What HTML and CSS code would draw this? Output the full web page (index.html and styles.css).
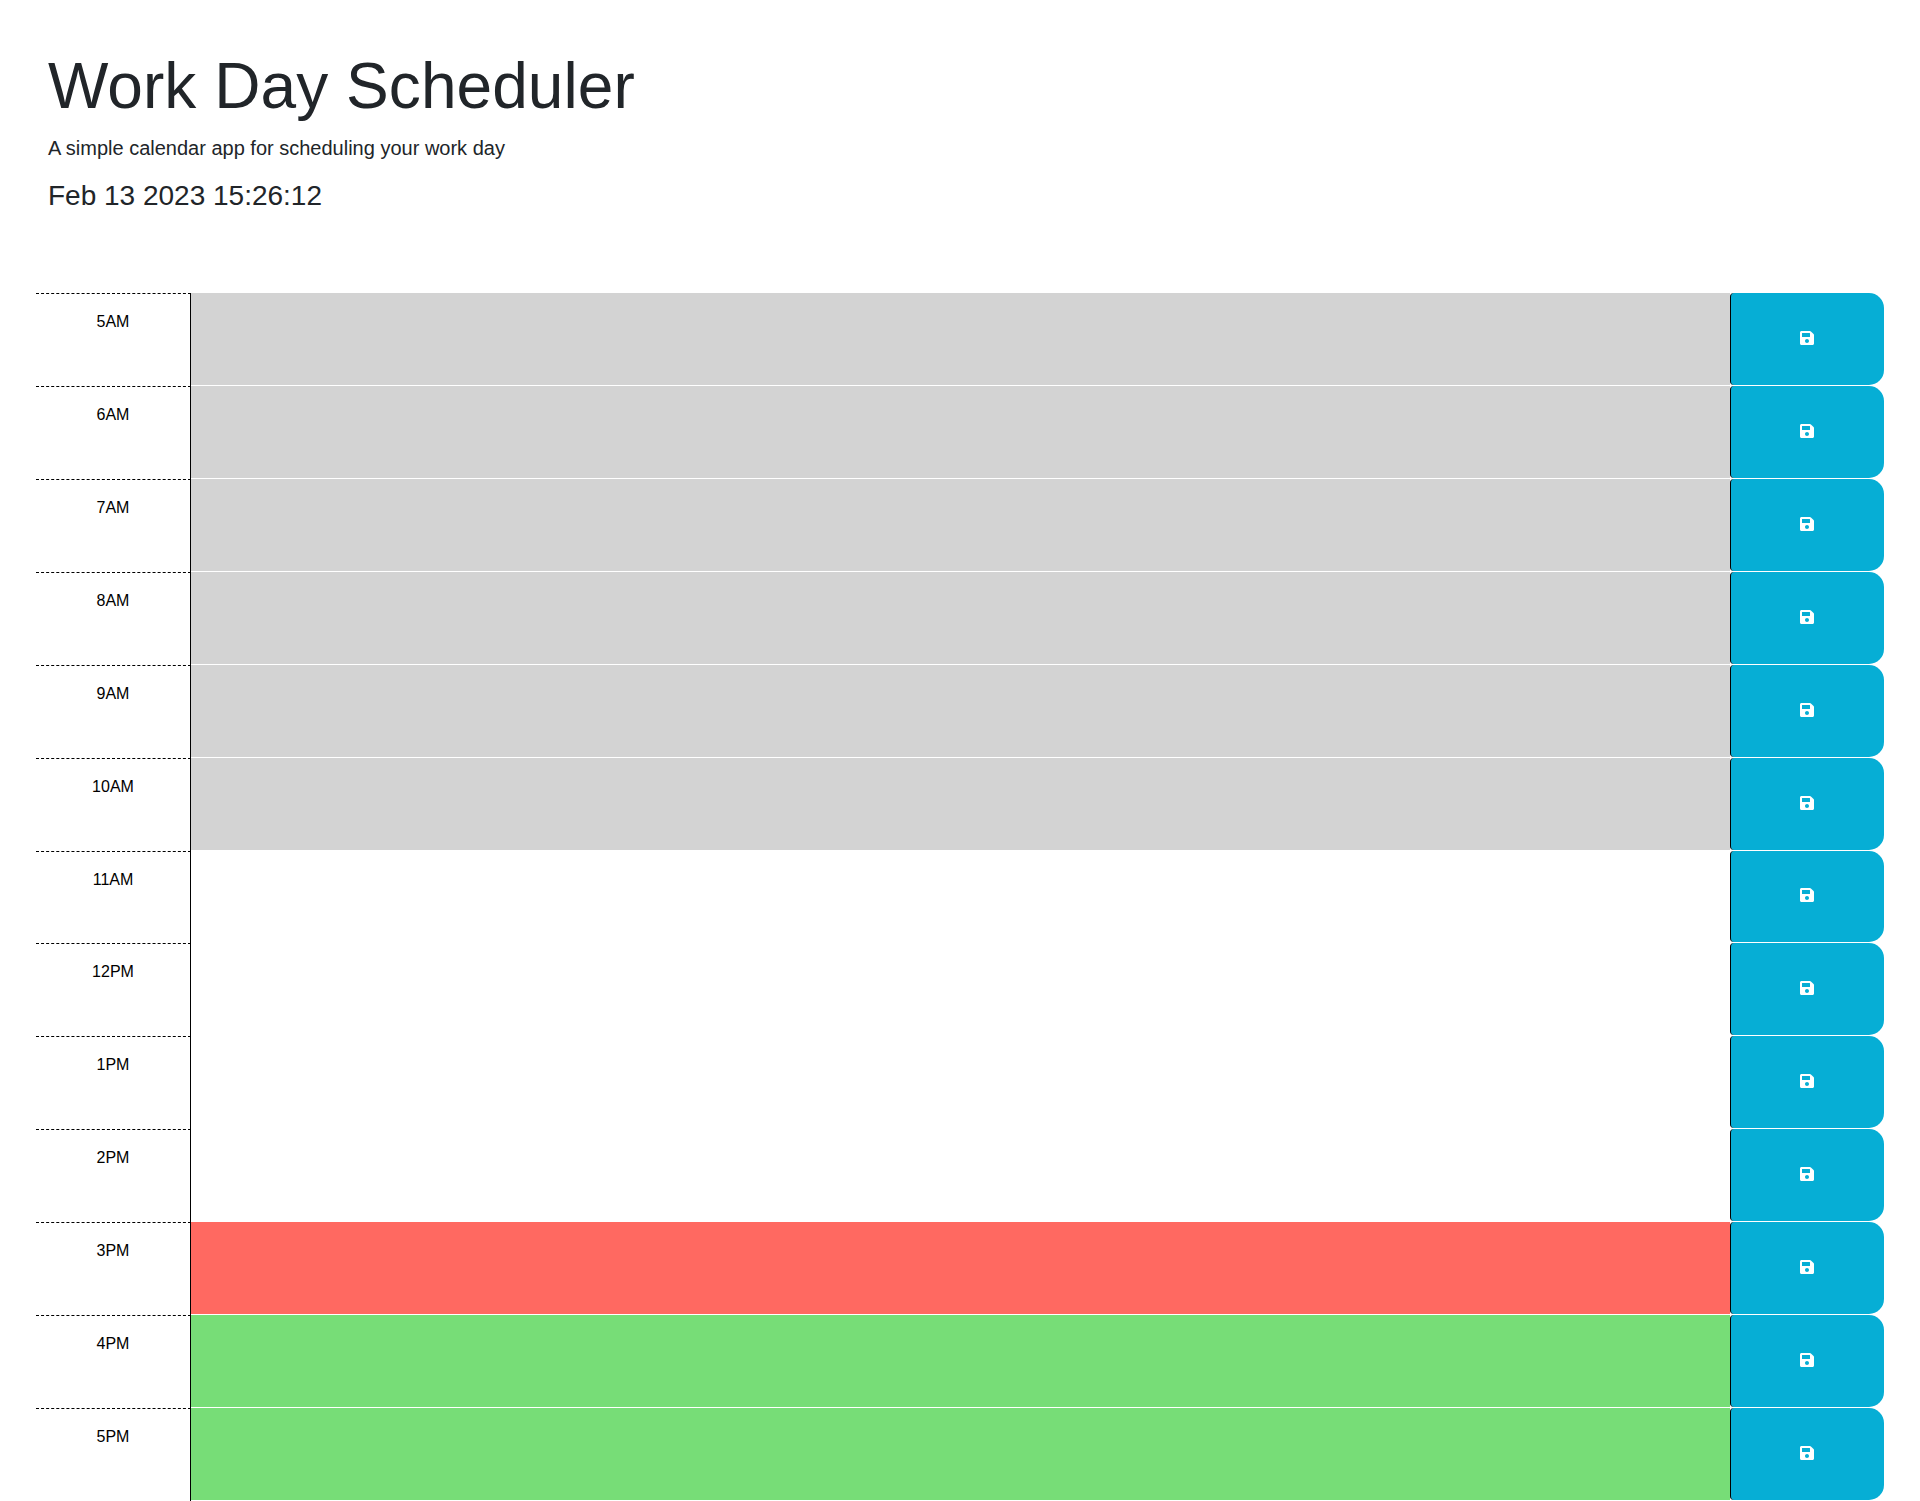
FILE: index.html
```html
<!DOCTYPE html>
<html lang="en">
<head>
<meta charset="utf-8">
<title>Work Day Scheduler</title>
<link rel="stylesheet" href="styles.css">
</head>
<body>
<svg class="defs" width="0" height="0" aria-hidden="true"><symbol id="save" viewBox="0 0 448 512"><path fill="currentColor" d="M433.941 129.941l-83.882-83.882A48 48 0 0 0 316.118 32H48C21.49 32 0 53.49 0 80v352c0 26.51 21.49 48 48 48h352c26.51 0 48-21.49 48-48V163.882a48 48 0 0 0-14.059-33.941zM224 416c-35.346 0-64-28.654-64-64 0-35.346 28.654-64 64-64s64 28.654 64 64c0 35.346-28.654 64-64 64zm96-304.52V212c0 6.627-5.373 12-12 12H76c-6.627 0-12-5.373-12-12V108c0-6.627 5.373-12 12-12h228.52c3.183 0 6.235 1.264 8.485 3.515l3.48 3.48A11.996 11.996 0 0 1 320 111.48z"/></symbol></svg>
<header class="head">
<h1 class="title">Work Day Scheduler</h1>
<p class="lead">A simple calendar app for scheduling your work day</p>
<p class="date">Feb 13 2023 15:26:12</p>
</header>
<main class="planner">
<div class="row"><div class="hour">5AM</div><textarea class="task past"></textarea><button class="save"><svg class="icon"><use href="#save"/></svg></button></div>
<div class="row"><div class="hour">6AM</div><textarea class="task past"></textarea><button class="save"><svg class="icon"><use href="#save"/></svg></button></div>
<div class="row"><div class="hour">7AM</div><textarea class="task past"></textarea><button class="save"><svg class="icon"><use href="#save"/></svg></button></div>
<div class="row"><div class="hour">8AM</div><textarea class="task past"></textarea><button class="save"><svg class="icon"><use href="#save"/></svg></button></div>
<div class="row"><div class="hour">9AM</div><textarea class="task past"></textarea><button class="save"><svg class="icon"><use href="#save"/></svg></button></div>
<div class="row"><div class="hour">10AM</div><textarea class="task past"></textarea><button class="save"><svg class="icon"><use href="#save"/></svg></button></div>
<div class="row"><div class="hour">11AM</div><textarea class="task"></textarea><button class="save"><svg class="icon"><use href="#save"/></svg></button></div>
<div class="row"><div class="hour">12PM</div><textarea class="task"></textarea><button class="save"><svg class="icon"><use href="#save"/></svg></button></div>
<div class="row"><div class="hour">1PM</div><textarea class="task"></textarea><button class="save"><svg class="icon"><use href="#save"/></svg></button></div>
<div class="row"><div class="hour">2PM</div><textarea class="task"></textarea><button class="save"><svg class="icon"><use href="#save"/></svg></button></div>
<div class="row"><div class="hour">3PM</div><textarea class="task present"></textarea><button class="save"><svg class="icon"><use href="#save"/></svg></button></div>
<div class="row"><div class="hour">4PM</div><textarea class="task future"></textarea><button class="save"><svg class="icon"><use href="#save"/></svg></button></div>
<div class="row"><div class="hour">5PM</div><textarea class="task future"></textarea><button class="save"><svg class="icon"><use href="#save"/></svg></button></div>
</main>
</body>
</html>
```
FILE: styles.css
```css
html, body { margin: 0; padding: 0; background: #fff; }
body { font-family: "Liberation Sans", Arial, sans-serif; color: #212529; font-size: 16px; overflow: hidden; height: 1501px; }
.defs { position: absolute; }
.head { height: 293.3px; padding: 48px 48px 0; box-sizing: border-box; }
.title { margin: 0 0 9px; font-size: 64px; font-weight: 400; line-height: 76px; letter-spacing: 0.06px; }
.lead { margin: 0 0 12px; font-size: 20px; line-height: 30px; }
.date { margin: 0; font-size: 28px; line-height: 42px; }
.planner { padding: 0 36px; }
.row { display: grid; grid-template-columns: 155px 1fr 154px; height: 92.875px; }
.hour { box-sizing: border-box; border-top: 1px dashed #000; border-right: 1px solid #000; padding-top: 18px; text-align: center; line-height: 19px; color: #000; }
.task { display: block; box-sizing: border-box; width: 100%; height: 100%; margin: 0; padding: 0; border: 0; border-bottom: 1px solid #fff; border-radius: 0; outline: 0; resize: none; background: #fff; }
.past { background: #d3d3d3; }
.present { background: #ff6961; }
.future { background: #77dd77; }
.save { display: flex; align-items: center; justify-content: center; box-sizing: border-box; height: calc(100% - 1px); margin: 0; padding: 0 2px 2px 0; border: 0; border-left: 1px solid #000; border-radius: 4px 15px 15px 4px; background: #06aed5; color: #fff; }
.icon { display: block; width: 14px; height: 16px; }
```
